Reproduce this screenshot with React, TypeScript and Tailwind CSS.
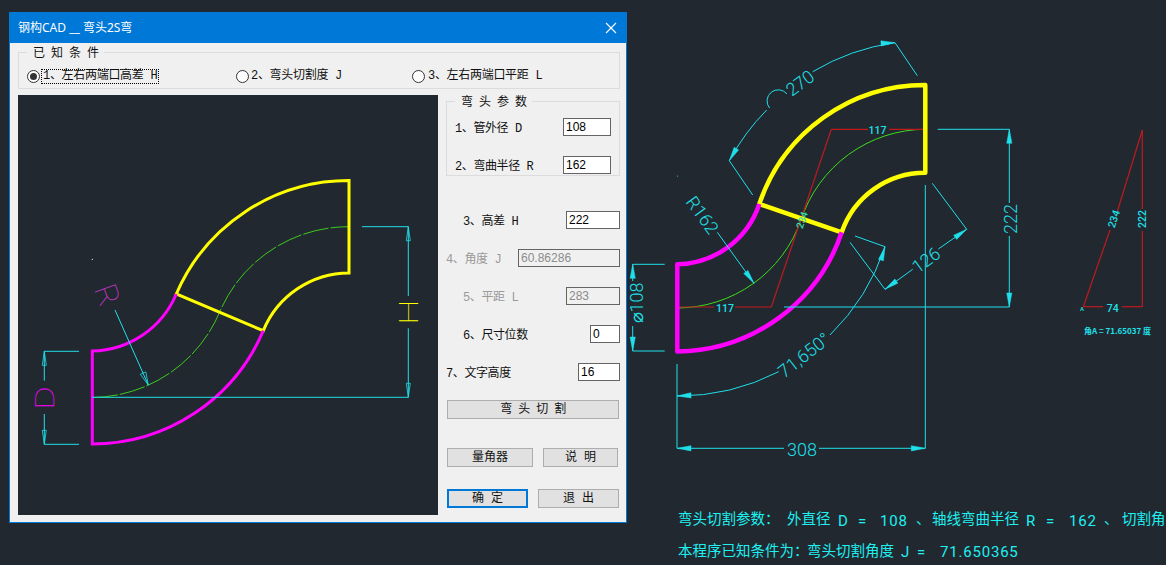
import type { ReactNode } from 'react';

const CYAN = '#1fe0ea';
const RED = '#c01a1e';
const YELLOW = '#ffff00';
const MAGENTA = '#ff00ff';
const GREEN = '#3fdc1a';

type Seg = [number, number, number, number];

function Lines({ segs, color, width = 1 }: { segs: Seg[]; color: string; width?: number }) {
  return (
    <>
      {segs.map((s, i) => (
        <line key={i} x1={s[0]} y1={s[1]} x2={s[2]} y2={s[3]} stroke={color} strokeWidth={width} />
      ))}
    </>
  );
}

// arrow head: tip at x,y, pointing along dx,dy
function Arrow({ x, y, dx, dy, len = 14, w = 2.6, hollow = false, color = CYAN }: {
  x: number; y: number; dx: number; dy: number; len?: number; w?: number; hollow?: boolean; color?: string;
}) {
  const d = Math.hypot(dx, dy);
  const ux = dx / d;
  const uy = dy / d;
  const bx = x - ux * len;
  const by = y - uy * len;
  const pts = `${x},${y} ${bx - uy * w},${by + ux * w} ${bx + uy * w},${by - ux * w}`;
  return <polygon points={pts} fill={hollow ? 'none' : color} stroke={color} strokeWidth={hollow ? 0.8 : 0.5} />;
}

function Dim({ x, y, a = 0, size = 18, color = CYAN, children }: {
  x: number; y: number; a?: number; size?: number; color?: string; children: ReactNode;
}) {
  return (
    <text
      x={x}
      y={y}
      fontSize={size}
      fill={color}
      textAnchor="middle"
      dominantBaseline="central"
      transform={`rotate(${a} ${x} ${y})`}
      className={`font-['Roboto',sans-serif] ${size < 12 ? 'font-medium' : 'font-light'}`}
    >
      {children}
    </text>
  );
}

function Note({ x, y, children }: { x: number; y: number; children: ReactNode }) {
  return (
    <text x={x} y={y} fontSize={14.5} fill="#1ff0f0" className="font-['Noto_Sans_CJK_SC',sans-serif] font-normal">
      {children}
    </text>
  );
}

function Latin({ x, y, children }: { x: number; y: number; children: ReactNode }) {
  return (
    <text x={x} y={y} fontSize={15} letterSpacing={0.8} fill="#1ff0f0" className="font-['Roboto',sans-serif] font-normal">
      {children}
    </text>
  );
}

function CadDrawing() {
  return (
    <svg className="absolute left-0 top-0 w-[1166px] h-[565px]" viewBox="0 0 1166 565">
      <path d="M677 308 A131.5 131.5 0 0 0 801 220 A131.5 131.5 0 0 1 925.3 129.3" fill="none" stroke={GREEN} strokeWidth={1} />
      <Lines
        color={RED}
        width={1.2}
        segs={[
          [831.3, 129.3, 868, 129.3], [889, 129.3, 925.3, 129.3],
          [831.3, 129.3, 771.3, 307],
          [677.3, 307, 714, 307], [735, 307, 771.3, 307],
          [1142.3, 130, 1142.3, 209], [1142.3, 231, 1142.3, 306.7],
          [1142.3, 130, 1117.5, 211], [1110, 230, 1083.3, 306.7],
          [1083.3, 306.7, 1103, 306.7], [1122, 306.7, 1142.3, 306.7],
        ]}
      />
      <path d="M759.3 204 A175 175 0 0 1 925.3 85 L925.3 172.7 A88 88 0 0 0 841.7 232.3 Z" fill="none" stroke={YELLOW} strokeWidth={4.5} strokeLinejoin="round" />
      <path d="M759.3 204 A88 88 0 0 1 677.3 264.3 L677.3 351.5 A175 175 0 0 0 841.7 232.3" fill="none" stroke={MAGENTA} strokeWidth={4.5} strokeLinejoin="round" />

      <Lines
        color={CYAN}
        segs={[
          [895, 42.7, 917.3, 75.7], [729.3, 160.7, 752.7, 195],
          [717.3, 232.3, 754, 283.3],
          [932.3, 183.3, 966.7, 229.3], [850, 242.3, 885, 289.3],
          [966.7, 229.3, 938.3, 249], [912.7, 269.3, 885, 289.3],
          [855, 236, 885, 246.7],
          [784, 307, 1009.3, 307], [937.7, 129.3, 1009.3, 129.3],
          [1009.3, 129.3, 1009.3, 203], [1009.3, 236, 1009.3, 307],
          [632.7, 264.3, 664.7, 264.3], [632.7, 351, 664.7, 351],
          [632.7, 264.3, 632.7, 281], [632.7, 326, 632.7, 351],
          [677, 364, 677, 448.3], [925.3, 185, 925.3, 448.3],
          [677, 448.3, 784, 448.3], [819, 448.3, 925.3, 448.3],
        ]}
      />
      <path d="M895 42.7 A219 219 0 0 0 812.7 71.7 M766.7 110 A219 219 0 0 0 729.3 160.7" fill="none" stroke={CYAN} />
      <path d="M885 246.7 A220 220 0 0 1 830 335 M778.7 371.7 A220 220 0 0 1 677 396" fill="none" stroke={CYAN} />
      <path d="M769.5 108 A9.5 9.5 0 1 1 787 94" fill="none" stroke={CYAN} />

      <Arrow x={895} y={42.7} dx={1} dy={-0.05} />
      <Arrow x={729.3} y={160.7} dx={-0.5} dy={0.85} />
      <Arrow x={754} y={283.3} dx={36.7} dy={51} />
      <Arrow x={966.7} y={229.3} dx={28.4} dy={-19.7} />
      <Arrow x={885} y={289.3} dx={-27.7} dy={20} />
      <Arrow x={885} y={246.7} dx={0.3} dy={-1} />
      <Arrow x={677} y={396} dx={-1} dy={0.05} />
      <Arrow x={1009.3} y={129.3} dx={0} dy={-1} />
      <Arrow x={1009.3} y={307} dx={0} dy={1} />
      <Arrow x={632.7} y={264.3} dx={0} dy={-1} />
      <Arrow x={632.7} y={351} dx={0} dy={1} />
      <Arrow x={677} y={448.3} dx={-1} dy={0} />
      <Arrow x={925.3} y={448.3} dx={1} dy={0} />

      <Dim x={800} y={83} a={-36}>270</Dim>
      <Dim x={702.5} y={215} a={54}>R162</Dim>
      <Dim x={926} y={260} a={-36}>126</Dim>
      <Dim x={1010} y={219} a={-90}>222</Dim>
      <Dim x={636} y={303} a={-90}>⌀108</Dim>
      <Dim x={804} y={355} a={-38}>71,650°</Dim>
      <Dim x={802} y={449}>308</Dim>
      <Dim x={877.5} y={130} size={10.5}>117</Dim>
      <Dim x={725} y={308} size={10.5}>117</Dim>
      <Dim x={802} y={220} a={-71} size={10} color="#2fe0b0">234</Dim>
      <Dim x={1114} y={219} a={-71} size={10.5}>234</Dim>
      <Dim x={1142.3} y={219} a={-90} size={10.5}>222</Dim>
      <Dim x={1112.7} y={308.5} size={10.5}>74</Dim>
      <Dim x={1082} y={308} size={6}>A</Dim>
      <text x={1084} y={334} fontSize={8} fill={CYAN} className="font-['Noto_Sans_CJK_SC',sans-serif] font-bold">角A = 71.65037 度</text>

      <Note x={678} y={524}>弯头切割参数：</Note>
      <Note x={787} y={524}>外直径</Note>
      <Latin x={838} y={526}>D</Latin>
      <Latin x={858} y={526}>=</Latin>
      <Latin x={880} y={526}>108</Latin>
      <Note x={916} y={524}>、</Note>
      <Note x={932} y={524}>轴线弯曲半径</Note>
      <Latin x={1026} y={526}>R</Latin>
      <Latin x={1046} y={526}>=</Latin>
      <Latin x={1069} y={526}>162</Latin>
      <Note x={1104} y={524}>、</Note>
      <Note x={1122} y={524}>切割角度</Note>

      <Note x={678} y={556}>本程序已知条件为：</Note>
      <Note x={807} y={556}>弯头切割角度</Note>
      <Latin x={901} y={557}>J</Latin>
      <Latin x={917} y={557}>=</Latin>
      <Latin x={940} y={557}>71.650365</Latin>
      <circle cx={677.5} cy={176} r={0.6} fill={CYAN} />
    </svg>
  );
}

function DialogDrawing() {
  return (
    <svg className="block w-[420px] h-[420px]" viewBox="18 95 420 420">
      <path d="M92 397.5 A140 140 0 0 0 219.7 312 A140 140 0 0 1 349 226.7" fill="none" stroke={GREEN} strokeWidth={0.9} strokeDasharray="26 2" />
      <path d="M176.3 294 A188 188 0 0 1 349 180.5 L349 273 A93 93 0 0 0 263.3 330.7 Z" fill="none" stroke={YELLOW} strokeWidth={3} />
      <path d="M176.3 294 A93 93 0 0 1 92.3 351 L92.3 444 A186 186 0 0 0 263.3 330.7" fill="none" stroke={MAGENTA} strokeWidth={3} />
      <Lines
        color={CYAN}
        segs={[
          [92, 397.3, 408.3, 397.3], [362, 226.7, 408.3, 226.7],
          [408.3, 226.7, 408.3, 296], [408.3, 328.3, 408.3, 397.3],
          [44.3, 351.3, 79, 351.3], [44.3, 351.3, 44.3, 380.7],
          [44.3, 414, 44.3, 444.3], [44.3, 444.3, 79, 444.3],
          [115, 310, 148.3, 385],
        ]}
      />
      <Arrow x={408.3} y={226.7} dx={0} dy={-1} w={2} len={14} hollow />
      <Arrow x={408.3} y={397.3} dx={0} dy={1} w={2} len={14} hollow />
      <Arrow x={44.3} y={351.3} dx={0} dy={-1} w={2} len={14} hollow />
      <Arrow x={44.3} y={444.3} dx={0} dy={1} w={2} len={14} hollow />
      <Arrow x={148.3} y={385} dx={33} dy={75} w={3} len={13} hollow />
      <circle cx={92.3} cy={259.3} r={0.6} fill="#fff" />
      <text x={0} y={0} fontSize={36} fill={YELLOW} textAnchor="middle" dominantBaseline="central" transform="translate(409 312) rotate(-90) scale(1 .7)" className="font-['Roboto',sans-serif] font-thin">H</text>
      <text x={0} y={0} fontSize={36} fill={MAGENTA} textAnchor="middle" dominantBaseline="central" transform="translate(45 398) rotate(-90) scale(1 .7)" className="font-['Roboto',sans-serif] font-thin">D</text>
      <text x={0} y={0} fontSize={31} fill="#c437c4" textAnchor="middle" dominantBaseline="central" transform="translate(107 295) rotate(70)" className="font-['Roboto',sans-serif] font-thin">R</text>
    </svg>
  );
}

function Radio({ checked, children, width }: { checked?: boolean; children: ReactNode; width: string }) {
  return (
    <label className={`flex items-center h-[16px] tracking-[-0.3px] ${width}`}>
      <span className="flex items-center justify-center w-[13px] h-[13px] rounded-full border border-[#333333] bg-white shrink-0">
        {checked && <span className="w-[7px] h-[7px] rounded-full bg-[#333333]" />}
      </span>
      {children}
    </label>
  );
}

function Field({ label, value, inputW, pl, disabled }: {
  label: string; value: string; inputW: string; pl: string; disabled?: boolean;
}) {
  return (
    <div className={`flex items-center justify-between h-[18px] mt-[20px] first:mt-[35px] ${pl}`}>
      <span className={`pt-[3px] tracking-[-0.4px] ${disabled ? 'text-[#9a9a9a]' : 'text-[#111111]'}`}>{label}</span>
      <input
        readOnly
        value={value}
        className={`h-[18px] border border-[#646464] pl-[2px] text-[12px] outline-none font-['Liberation_Sans',sans-serif] ${inputW} ${disabled ? 'bg-[#f0f0f0] text-[#8c8c8c]' : 'bg-white text-black'}`}
      />
    </div>
  );
}

function Btn({ children, className }: { children: ReactNode; className: string }) {
  return (
    <button className={`h-[19px] flex items-center justify-center bg-[#e1e1e1] text-[#111111] ${className}`}>
      {children}
    </button>
  );
}

function Dialog() {
  return (
    <div className="absolute left-[9px] top-[12px] w-[618px] h-[511px] border border-[#0078d7] bg-[#f0f0f0] text-[12px] leading-[16px] font-['Liberation_Mono','Noto_Sans_CJK_SC',monospace]">
      <div className="flex items-center justify-between h-[30px] bg-[#0078d7] pl-[8px] pr-[9px] text-white font-['Noto_Sans','Noto_Sans_CJK_SC',sans-serif]">
        <span>钢构CAD __ 弯头2S弯</span>
        <svg width="12" height="12" viewBox="0 0 12 12" stroke="#ffffff" strokeWidth="1.1">
          <path d="M1 1 L11 11 M11 1 L1 11" />
        </svg>
      </div>

      <div className="pl-[8px] pr-[6px] pt-px">
        <fieldset className="h-[45px] border border-[#dcdcdc] pl-[8px] box-border">
          <legend className="px-[6px] h-[16px] leading-[20px] tracking-[-0.6px] text-[#111111]">已 知 条 件</legend>
          <div className="flex mt-[8px] text-[#111111]">
            <Radio checked width="w-[209px]">
              <span className="ml-[1px] px-px border border-dotted border-black leading-[13px]">1、左右两端口高差 H</span>
            </Radio>
            <Radio width="w-[176px]"><span className="ml-[2px]">2、弯头切割度 J</span></Radio>
            <Radio width="w-[190px]"><span className="ml-[3px]">3、左右两端口平距 L</span></Radio>
          </div>
        </fieldset>

        <div className="flex mt-[6px]">
          <div className="w-[420px] h-[420px] bg-[#212830] shrink-0">
            <DialogDrawing />
          </div>
          <div className="w-[174px] ml-[8px] -mt-[2px] text-[#111111]">
            <fieldset className="h-[83px] border border-[#dcdcdc] pl-[8px] pr-[8px] box-border">
              <legend className="px-[6px] h-[16px] leading-[20px] tracking-[-0.6px]">弯 头 参 数</legend>
              <div className="flex items-center justify-between h-[18px] mt-[9px]">
                <span className="pt-[3px] tracking-[-0.4px]">1、管外径 D</span>
                <input readOnly value="108" className="w-[48px] h-[18px] border border-[#646464] bg-white pl-[2px] text-[12px] text-black outline-none font-['Liberation_Sans',sans-serif]" />
              </div>
              <div className="flex items-center justify-between h-[18px] mt-[20px]">
                <span className="pt-[3px] tracking-[-0.4px]">2、弯曲半径 R</span>
                <input readOnly value="162" className="w-[48px] h-[18px] border border-[#646464] bg-white pl-[2px] text-[12px] text-black outline-none font-['Liberation_Sans',sans-serif]" />
              </div>
            </fieldset>

            <div>
              <Field label="3、高差 H" value="222" inputW="w-[54px]" pl="pl-[17px]" />
              <Field label="4、角度 J" value="60.86286" inputW="w-[102px]" pl="pl-0" disabled />
              <Field label="5、平距 L" value="283" inputW="w-[54px]" pl="pl-[17px]" disabled />
              <Field label="6、尺寸位数" value="0" inputW="w-[30px]" pl="pl-[17px]" />
              <Field label="7、文字高度" value="16" inputW="w-[42px]" pl="pl-0" />
            </div>

            <Btn className="w-[172px] ml-px mt-[19px] border border-[#adadad] tracking-[-0.6px]">弯 头 切 割</Btn>
            <div className="flex ml-px mt-[29px] gap-[10px]">
              <Btn className="w-[86px] border border-[#adadad]">量角器</Btn>
              <Btn className="w-[75px] border border-[#adadad]">说 明</Btn>
            </div>
            <div className="flex ml-px mt-[22px] gap-[10px]">
              <Btn className="w-[81px] border-2 border-[#0078d7]">确 定</Btn>
              <Btn className="w-[81px] border border-[#adadad]">退 出</Btn>
            </div>
          </div>
        </div>
      </div>
    </div>
  );
}

export default function App() {
  return (
    <div className="relative w-[1166px] h-[565px] overflow-hidden bg-[#212830]">
      <CadDrawing />
      <Dialog />
    </div>
  );
}
